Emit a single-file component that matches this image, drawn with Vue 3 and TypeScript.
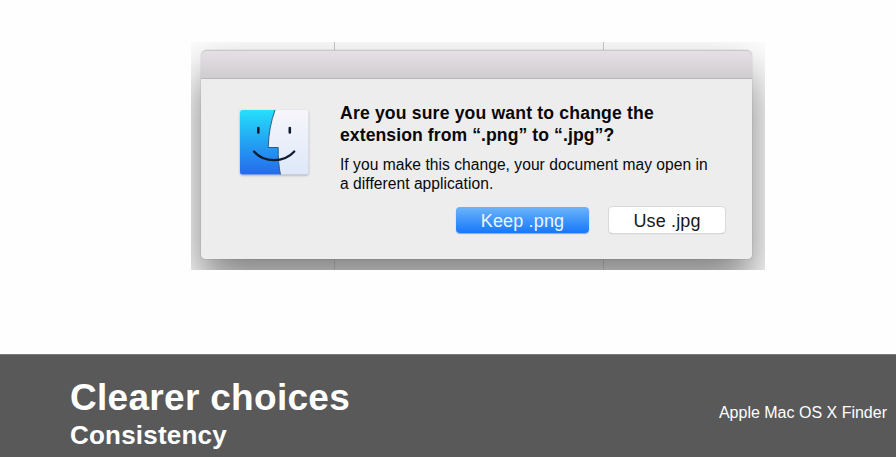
<script setup lang="ts">
interface Choice {
  label: string
  primary: boolean
}

const heading: string[] = ['Are you sure you want to change the', 'extension from “.png” to “.jpg”?']
const details: string[] = ['If you make this change, your document may open in', 'a different application.']
const choices: Choice[] = [
  { label: 'Keep .png', primary: true },
  { label: 'Use .jpg', primary: false },
]
</script>

<template>
  <main class="slide">
    <section class="stage">
      <div class="shot">
        <div class="dialog" role="dialog">
          <div class="titlebar"></div>
          <div class="body">
            <svg class="finder" width="76" height="74" viewBox="0 0 76 74" aria-hidden="true">
              <defs>
                <linearGradient id="blue" x1="0" y1="0" x2="0" y2="1">
                  <stop offset="0" stop-color="#27dffb" />
                  <stop offset="0.5" stop-color="#22a2f2" />
                  <stop offset="1" stop-color="#2769ec" />
                </linearGradient>
                <linearGradient id="pale" x1="0" y1="0" x2="0" y2="1">
                  <stop offset="0" stop-color="#f7f6fa" />
                  <stop offset="1" stop-color="#dde8f9" />
                </linearGradient>
                <clipPath id="tile"><rect x="4" y="4" width="68.5" height="64.5" rx="2.5" /></clipPath>
                <filter id="soft" x="-10%" y="-10%" width="120%" height="120%">
                  <feGaussianBlur stdDeviation="1.1" />
                </filter>
              </defs>
              <rect x="4" y="5" width="68.5" height="64.5" rx="2.5" fill="#777c88" opacity="0.6" filter="url(#soft)" />
              <g clip-path="url(#tile)">
                <rect x="4" y="4" width="69" height="65" fill="url(#pale)" />
                <path d="M4 4H39C35 15 32.5 28 32.2 41.5H42.2C42 51 42.7 60 44.5 69H4Z" fill="url(#blue)" />
                <path d="M39 4C35 15 32.5 28 32.2 41.5H42.2C42 51 42.7 60 44.5 69" fill="none" stroke="#285c88" stroke-width="1" />
              </g>
              <g fill="none" stroke="#101c2c" stroke-linecap="round">
                <path d="M22.3 22V26.5M53.8 22V26.5" stroke-width="2.6" />
                <path d="M18 45.5C28 57 48 57 58.3 45.5" stroke-width="2.2" />
              </g>
            </svg>
            <div class="content">
              <h2 class="heading">
                <span v-for="line in heading" :key="line">{{ line }}</span>
              </h2>
              <p class="details">
                <span v-for="line in details" :key="line">{{ line }}</span>
              </p>
              <div class="actions">
                <button
                  v-for="choice in choices"
                  :key="choice.label"
                  type="button"
                  class="choice"
                  :class="{ primary: choice.primary }"
                >
                  {{ choice.label }}
                </button>
              </div>
            </div>
          </div>
        </div>
      </div>
    </section>
    <footer class="caption">
      <div class="topic">
        <h1>Clearer choices</h1>
        <p>Consistency</p>
      </div>
      <span class="source">Apple Mac OS X Finder</span>
    </footer>
  </main>
</template>

<style>
body {
  margin: 0;
  background: #fefefe;
}
</style>

<style scoped>
.slide {
  display: flex;
  flex-direction: column;
  width: 896px;
  height: 457px;
  overflow: hidden;
  font-family: 'Liberation Sans', Arial, sans-serif;
}

.stage {
  box-sizing: border-box;
  height: 354px;
  padding: 42px 0 0 191px;
}

.shot {
  box-sizing: border-box;
  width: 574px;
  height: 228px;
  padding: 8px 13px 10px 10px;
  overflow: hidden;
  background:
    linear-gradient(#c8c8c8, #e2e2e2) 143px 0 / 1px 100% no-repeat,
    linear-gradient(#c8c8c8, #e2e2e2) 412px 0 / 1px 100% no-repeat,
    #fdfdfd;
}

.dialog {
  box-sizing: border-box;
  width: 551px;
  height: 209px;
  border-radius: 6px 6px 4px 4px;
  background: #ededee;
  box-shadow:
    0 0 1px rgba(0, 0, 0, 0.45),
    0 24px 44px 1px rgba(0, 0, 0, 0.49);
}

.titlebar {
  box-sizing: border-box;
  height: 29px;
  border-top: 1px solid #c9c7c8;
  border-bottom: 1px solid #b9b7b8;
  border-radius: 6px 6px 0 0;
  background: linear-gradient(#e6e0e6, #cfcdcf);
}

.body {
  display: flex;
  padding: 27px 27px 0 35px;
}

.finder {
  flex: none;
}

.content {
  display: flex;
  flex-direction: column;
  width: 385px;
  margin: -4px 0 0 28px;
  color: #080808;
}

.heading,
.details {
  display: flex;
  flex-direction: column;
  margin: 0;
  white-space: nowrap;
}

.heading {
  font-size: 17.6px;
  line-height: 22px;
  letter-spacing: 0.17px;
}

.heading span:last-child {
  letter-spacing: 0.08px;
}

.details {
  margin-top: 10px;
  font-size: 15.6px;
  line-height: 18.5px;
  letter-spacing: 0.04px;
}

.actions {
  display: flex;
  justify-content: flex-end;
  gap: 20px;
  margin-top: 14px;
}

.choice {
  box-sizing: border-box;
  width: 116px;
  height: 26px;
  padding: 2px 0 0;
  border: 0;
  border-radius: 4px;
  background: #fff;
  box-shadow: 0 0 0 1px #d9d9da, 0 1px 1px #aaa;
  color: #181818;
  font: 18px/24px 'Liberation Sans', Arial, sans-serif;
  letter-spacing: 0.15px;
}

.choice.primary {
  width: 133px;
  background: linear-gradient(#6cb4fa, #1778fb);
  box-shadow: 0 1px 1px #86a9dc;
  color: #edf5ff;
}

.caption {
  box-sizing: border-box;
  display: flex;
  justify-content: space-between;
  height: 103px;
  padding: 22px 9px 0 70px;
  border-top: 1px solid #7c7c7d;
  background: #59595a;
  color: #fff;
}

.topic h1 {
  margin: 0;
  font-size: 37px;
  line-height: 42px;
  letter-spacing: 0.3px;
}

.topic p {
  margin: -1px 0 0;
  font-size: 26px;
  font-weight: bold;
  line-height: 34px;
  letter-spacing: 0.2px;
}

.source {
  margin-top: 26px;
  font-size: 16px;
  line-height: 20px;
}
</style>
